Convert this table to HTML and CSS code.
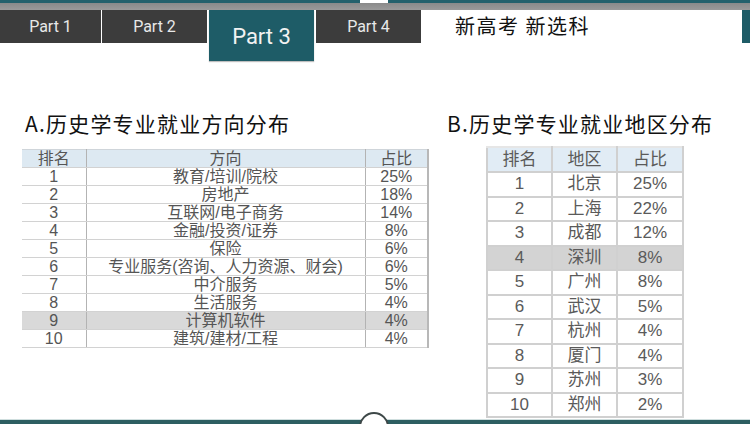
FILE: index.html
```html
<!DOCTYPE html>
<html lang="zh">
<head>
<meta charset="utf-8">
<link rel="stylesheet" href="styles.css">
</head>
<body>
<div class="page">
  <header class="top">
    <div class="stripe-teal"></div>
    <div class="stripe-gray"></div>
    <nav class="tabs">
      <div class="tab t1">Part 1</div>
      <div class="tab t2">Part 2</div>
      <div class="tab active">Part 3</div>
      <div class="tab t4">Part 4</div>
      <div class="headline">新高考 新选科</div>
      <div class="edge"></div>
    </nav>
  </header>
  <main class="content">
    <section class="col-a">
      <h2 class="title">A.历史学专业就业方向分布</h2>
      <table class="tbl-a">
        <colgroup><col class="c1"><col class="c2"><col class="c3"></colgroup>
        <thead><tr><th>排名</th><th>方向</th><th>占比</th></tr></thead>
        <tbody>
          <tr><td>1</td><td>教育/培训/院校</td><td>25%</td></tr>
          <tr><td>2</td><td>房地产</td><td>18%</td></tr>
          <tr><td>3</td><td>互联网/电子商务</td><td>14%</td></tr>
          <tr><td>4</td><td>金融/投资/证券</td><td>8%</td></tr>
          <tr><td>5</td><td>保险</td><td>6%</td></tr>
          <tr><td>6</td><td>专业服务(咨询、人力资源、财会)</td><td>6%</td></tr>
          <tr><td>7</td><td>中介服务</td><td>5%</td></tr>
          <tr><td>8</td><td>生活服务</td><td>4%</td></tr>
          <tr class="hl"><td>9</td><td>计算机软件</td><td>4%</td></tr>
          <tr><td>10</td><td>建筑/建材/工程</td><td>4%</td></tr>
        </tbody>
      </table>
    </section>
    <section class="col-b">
      <h2 class="title">B.历史学专业就业地区分布</h2>
      <table class="tbl-b">
        <colgroup><col class="d1"><col class="d2"><col class="d3"></colgroup>
        <thead><tr><th>排名</th><th>地区</th><th>占比</th></tr></thead>
        <tbody>
          <tr><td>1</td><td>北京</td><td>25%</td></tr>
          <tr><td>2</td><td>上海</td><td>22%</td></tr>
          <tr><td>3</td><td>成都</td><td>12%</td></tr>
          <tr class="hl"><td>4</td><td>深圳</td><td>8%</td></tr>
          <tr><td>5</td><td>广州</td><td>8%</td></tr>
          <tr><td>6</td><td>武汉</td><td>5%</td></tr>
          <tr><td>7</td><td>杭州</td><td>4%</td></tr>
          <tr><td>8</td><td>厦门</td><td>4%</td></tr>
          <tr><td>9</td><td>苏州</td><td>3%</td></tr>
          <tr><td>10</td><td>郑州</td><td>2%</td></tr>
        </tbody>
      </table>
    </section>
  </main>
  <footer class="bottom"><span class="knob"></span></footer>
</div>
</body>
</html>
```

FILE: styles.css
```css
* { box-sizing: border-box; }
html, body { margin: 0; padding: 0; background: #fff; }
body { font-family: "Noto Sans CJK SC", "Noto Sans", sans-serif; }

.page {
  width: 750px;
  height: 424px;
  display: flex;
  flex-direction: column;
  overflow: hidden;
}

.stripe-teal {
  height: 3px;
  background: linear-gradient(to right, #24616c 0, #24616c 360px, #fff 360px, #fff 388px, #24616c 388px);
}
.stripe-gray {
  height: 7px;
  background: linear-gradient(#8a8a8a, #9a9a9a);
}

.tabs {
  display: flex;
  align-items: flex-start;
  height: 33px;
}
.tab {
  height: 33px;
  width: 105px;
  background: #3c3c3c;
  color: #e8e8e8;
  font-family: "Roboto", "Liberation Sans", sans-serif;
  font-size: 16px;
  display: flex;
  align-items: center;
  justify-content: center;
}
.t1 { width: 101px; margin-right: 1px; }
.t2 { margin-right: 2px; }
.active {
  height: 51px;
  margin-right: 2px;
  background: #1e5c67;
  font-size: 22px;
  color: #f2f2f2;
  padding-top: 2px;
  box-shadow: 0 1px 1px rgba(0,0,0,0.25);
  position: relative;
  z-index: 1;
}
.headline {
  margin-left: 34px;
  font-size: 20px;
  color: #111;
  line-height: 31px;
  flex: 1;
  letter-spacing: 1.5px;
}
.edge {
  width: 8px;
  height: 33px;
  background: #1e5c67;
}

.content {
  display: flex;
  padding-left: 22px;
  margin-top: 66px;
}
.col-a { width: 406px; }
.col-b { margin-left: 19px; }

.title {
  margin: 0;
  font-weight: normal;
  font-size: 21px;
  line-height: 28px;
  color: #111;
  white-space: nowrap;
  letter-spacing: 1.2px;
}
.col-a .title { padding-left: 3px; }

table {
  border-collapse: collapse;
  table-layout: fixed;
  color: #555;
  font-family: "Liberation Sans", "Noto Sans CJK SC", sans-serif;
}
th, td { padding: 0; text-align: center; font-weight: normal; white-space: nowrap; }

.tbl-a {
  width: 406px;
  margin-top: 12px;
  font-size: 16px;
  border-top: 1px solid #cfd5da;
  border-bottom: 1px solid #b5b5b5;
}
.tbl-a .c1 { width: 64px; }
.tbl-a .c2 { width: 279px; }
.tbl-a .c3 { width: 63px; }
.tbl-a th, .tbl-a td {
  height: 18px;
  line-height: 17px;
  border-bottom: 1px solid #d2d2d2;
  border-right: 1px solid #b3b3b3;
}
.tbl-a th { background: #dde9f2; }
.tbl-a tr > :last-child { border-right: 2px solid #b8b8b8; }
.tbl-a .hl td { background: #d9d9d9; }

.tbl-b {
  width: 196px;
  margin-top: 9px;
  margin-left: 39px;
  font-size: 17px;
  border: 1px solid #c8c8c8;
  color: #5a5a5a;
}
.tbl-b .d1 { width: 65px; }
.tbl-b .d2 { width: 65px; }
.tbl-b .d3 { width: 66px; }
.tbl-b th, .tbl-b td {
  height: 24.5px;
  line-height: 22px;
  border: 2px solid #d0d0d0;
  border-top-color: #e6e6e6;
}
.tbl-b th { background: #e1ecf5; height: 25px; }
.tbl-b .hl td { background: #d3d3d3; }

.bottom {
  margin-top: auto;
  height: 5px;
  background: #2d5e61;
  border-top: 1px solid #cfdede;
  position: relative;
}
.knob {
  position: absolute;
  left: 359px;
  top: -8px;
  width: 30px;
  height: 30px;
  border-radius: 50%;
  background: #fff;
  border: 2px solid #3e4848;
}
```
